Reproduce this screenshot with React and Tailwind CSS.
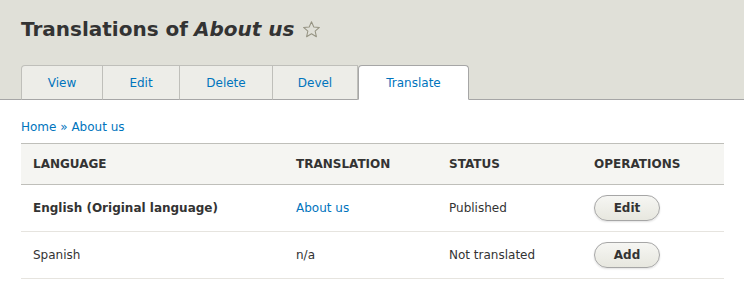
import React from 'react'

const tabs = [
  { label: 'View', width: 'w-[82px]' },
  { label: 'Edit', width: 'w-[77px]' },
  { label: 'Delete', width: 'w-[93px]' },
  { label: 'Devel', width: 'w-[85px]' },
  { label: 'Translate', width: 'w-[111px]', active: true },
]

const rows = [
  { language: 'English (Original language)', bold: true, translation: 'About us', link: true, status: 'Published', op: 'Edit' },
  { language: 'Spanish', translation: 'n/a', status: 'Not translated', op: 'Add' },
]

const Star = () => (
  <svg className="w-[19px] h-[19px] ml-[8px] mt-[1px]" viewBox="0 0 24 24" fill="none" stroke="#959382" strokeWidth={1.3} strokeLinejoin="round">
    <path d="M12 2.2l2.9 6.6 7.1.6-5.4 4.7 1.6 7-6.2-3.7-6.2 3.7 1.6-7L2 9.4l7.1-.6z" />
  </svg>
)

const App = () => {
  return (
    <div className="w-[744px] h-[292px] bg-white text-[#333] text-[12px] font-['DejaVu_Sans',sans-serif] overflow-hidden">
      {/* Header */}
      <div className="bg-[#e0e0d8] border-b border-[#a6a6a6] pl-[21px]">
        <h1 className="flex items-center pt-[15px] text-[20px] leading-[28px] font-bold text-[#333]">
          Translations of <em className="ml-[6px] italic">About us</em>
          <Star />
        </h1>
        <ul className="flex mt-[22px] -mb-px">
          {tabs.map((tab, i) => (
            <li
              key={tab.label}
              className={
                tab.active
                  ? `${tab.width} h-[35px] flex items-center justify-center bg-white border-t border-x border-[#a6a6a6] border-b border-b-white rounded-t-[4px] text-[#0074bd]`
                  : `${tab.width} h-[35px] flex items-center justify-center bg-[#ededE8] border-t border-r border-b border-[#bfbfba] border-b-[#a6a6a6] text-[#0074bd] ${i === 0 ? 'border-l rounded-tl-[4px]' : ''}`
              }
            >
              {tab.label}
            </li>
          ))}
        </ul>
      </div>

      {/* Content */}
      <div className="pl-[21px] pr-[20px]">
        <div className="pt-[18px] leading-[18px] text-[#0074bd]">
          Home » About us
        </div>

        <div className="mt-[7px] border-t border-[#bfbfba]">
          <div className="grid grid-cols-[263px_153px_145px_142px] h-[41px] items-center bg-[#f5f5f2] border-b border-[#bfbfba] font-bold uppercase text-[#333]">
            <div className="pl-[12px]">Language</div>
            <div className="pl-[12px]">Translation</div>
            <div className="pl-[12px]">Status</div>
            <div className="pl-[12px]">Operations</div>
          </div>
          {rows.map(row => (
            <div key={row.language} className="grid grid-cols-[263px_153px_145px_142px] h-[47px] items-center border-b border-[#e6e4df]">
              <div className={`pl-[12px] ${row.bold ? 'font-bold' : ''}`}>{row.language}</div>
              <div className={`pl-[12px] ${row.link ? 'text-[#0074bd]' : ''}`}>{row.translation}</div>
              <div className="pl-[12px]">{row.status}</div>
              <div className="pl-[12px]">
                <button className="w-[66px] h-[26px] rounded-full border border-[#a6a6a6] bg-gradient-to-b from-[#f6f6f3] to-[#e7e7df] font-bold text-[#333] shadow-[0_1px_2px_rgba(0,0,0,0.12)]">
                  {row.op}
                </button>
              </div>
            </div>
          ))}
        </div>
      </div>
    </div>
  )
}

export default App
